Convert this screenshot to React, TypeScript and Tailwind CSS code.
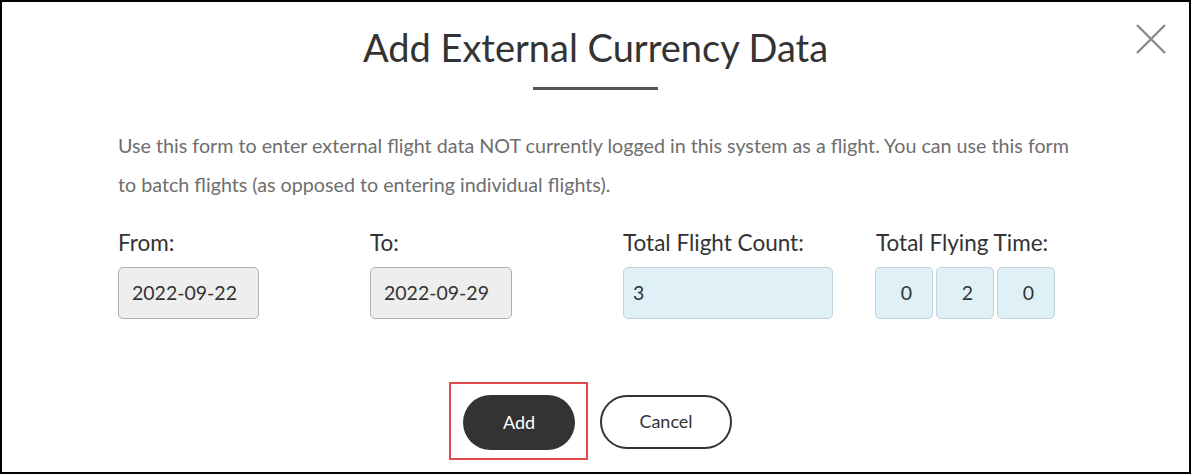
import React from "react";

export default function App() {
  return (
    <div
      className="relative w-[1191px] h-[474px] border-2 border-black bg-white flex flex-col"
      style={{ fontFamily: "Lato, 'Open Sans', sans-serif" }}
    >
      <button className="absolute left-[1134px] top-[22px] w-[30px] h-[30px]" aria-label="Close">
        <svg width="30" height="30" viewBox="0 0 30 30">
          <path d="M1 1 L29 29 M29 1 L1 29" stroke="#8a8a8a" strokeWidth="2.4" fill="none" />
        </svg>
      </button>

      <h2 className="mt-[22px] text-center text-[38px] leading-[46px] text-[#333]">
        Add External Currency Data
      </h2>
      <div className="mx-auto mt-[17px] w-[125px] h-[3px] bg-[#555]" />

      <p className="mt-[36px] px-[116px] text-[19.7px] leading-[39px] text-[#6e6e6e]">
        Use this form to enter external flight data NOT currently logged in this system as a flight. You can use this form
        to batch flights (as opposed to entering individual flights).
      </p>

      <div className="mt-[27px] ml-[116px] grid grid-cols-[252px_253px_253px_260px] text-[#333]">
        <div className="flex flex-col">
          <label className="text-[22.5px] leading-[24px]">From:</label>
          <div className="mt-[12px] w-[141px] h-[52px] rounded-[5px] border border-[#b0b0b0] bg-[#eeeeee] flex items-center pl-[13px] text-[19.5px] text-[#333]">
            2022-09-22
          </div>
        </div>
        <div className="flex flex-col">
          <label className="text-[22.5px] leading-[24px]">To:</label>
          <div className="mt-[12px] w-[142px] h-[52px] rounded-[5px] border border-[#b0b0b0] bg-[#eeeeee] flex items-center pl-[13px] text-[19.5px] text-[#333]">
            2022-09-29
          </div>
        </div>
        <div className="flex flex-col">
          <label className="text-[22.5px] leading-[24px]">Total Flight Count:</label>
          <div className="mt-[12px] w-[210px] h-[52px] rounded-[5px] border border-[#bfd3dc] bg-[#dff1f7] flex items-center pl-[9px] text-[19.5px] text-[#333]">
            3
          </div>
        </div>
        <div className="flex flex-col">
          <label className="text-[22.5px] leading-[24px]">Total Flying Time:</label>
          <div className="mt-[12px] -ml-[1px] flex gap-[3px]">
            {["0", "2", "0"].map((v, i) => (
              <div
                key={i}
                className="w-[58px] h-[52px] rounded-[5px] border border-[#bfd3dc] bg-[#dff1f7] flex items-center justify-center pl-[5px] text-[19.5px] text-[#333]"
              >
                {v}
              </div>
            ))}
          </div>
        </div>
      </div>

      <div className="mt-[63px] ml-[447px] flex items-center">
        <div className="border-2 border-[#e04a4a] pl-[12px] pr-[11px] pt-[11px] pb-[8px]">
          <button className="w-[112px] h-[55px] rounded-full bg-[#333] text-white text-[18px]">Add</button>
        </div>
        <button className="ml-[12px] mt-[1px] w-[132px] h-[54px] rounded-full border-2 border-[#333] bg-white text-[#333] text-[18px]">
          Cancel
        </button>
      </div>
    </div>
  );
}
